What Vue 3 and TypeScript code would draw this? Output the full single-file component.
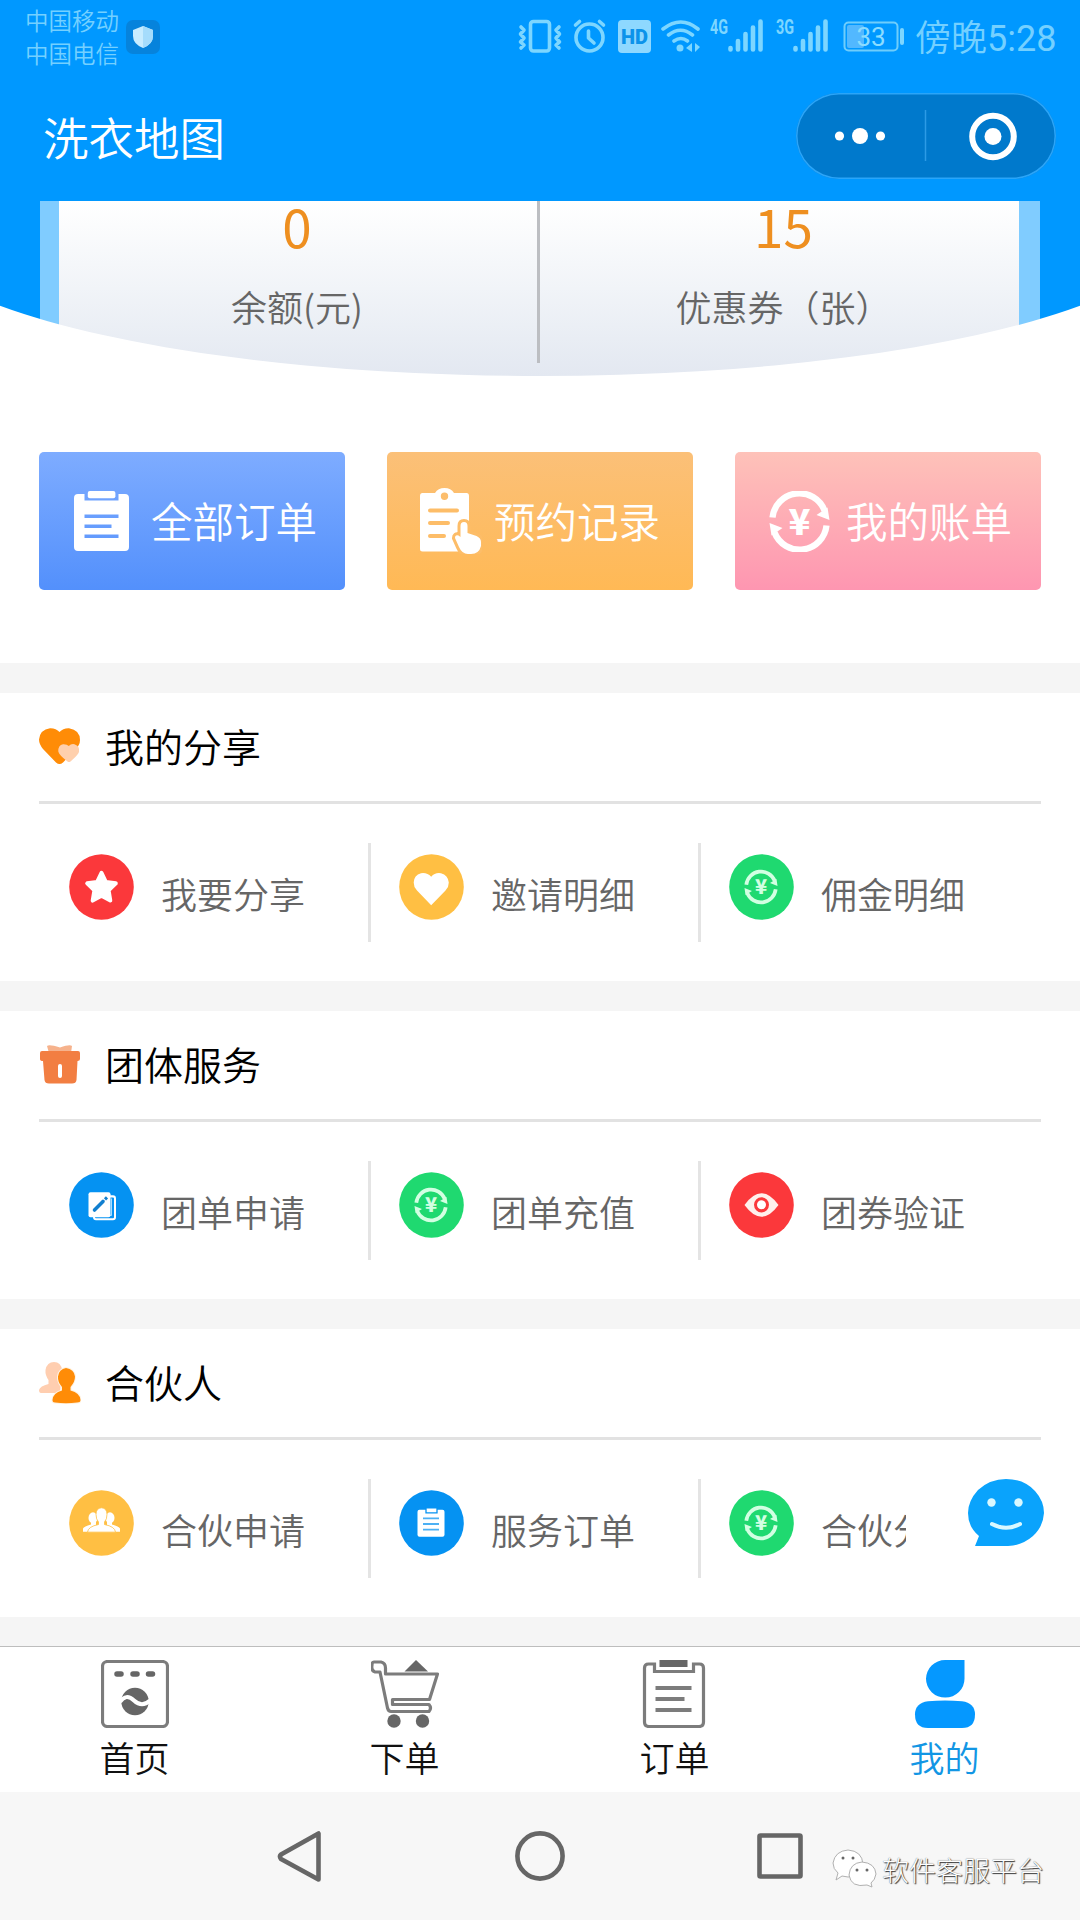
<script setup lang="ts">
interface Entry {
  label: string
  icon: string
  color: string
  clipped?: boolean
}
interface Section {
  title: string
  icon: string
  entries: Entry[]
}

const red = '#fb383b'
const yellow = '#ffbf43'
const green = '#1fd970'
const blue = '#0592f2'

const actions = [
  { label: '全部订单', icon: 'orders', kind: 'all' },
  { label: '预约记录', icon: 'booking', kind: 'booking' },
  { label: '我的账单', icon: 'bill', kind: 'bill' },
]

const sections: Section[] = [
  {
    title: '我的分享',
    icon: 'hearts',
    entries: [
      { label: '我要分享', icon: 'star', color: red },
      { label: '邀请明细', icon: 'heart', color: yellow },
      { label: '佣金明细', icon: 'money', color: green },
    ],
  },
  {
    title: '团体服务',
    icon: 'gift',
    entries: [
      { label: '团单申请', icon: 'edit', color: blue },
      { label: '团单充值', icon: 'money', color: green },
      { label: '团券验证', icon: 'eye', color: red },
    ],
  },
  {
    title: '合伙人',
    icon: 'partners',
    entries: [
      { label: '合伙申请', icon: 'team', color: yellow },
      { label: '服务订单', icon: 'list', color: blue },
      { label: '合伙分', icon: 'money', color: green, clipped: true },
    ],
  },
]

const tabs = [
  { label: '首页', icon: 'washer', active: false },
  { label: '下单', icon: 'cart', active: false },
  { label: '订单', icon: 'sheet', active: false },
  { label: '我的', icon: 'me', active: true },
]
</script>

<template>
  <div class="page">
    <header class="top">
      <div class="status">
        <div class="carriers">
          <span>中国移动</span>
          <span>中国电信</span>
        </div>
        <svg class="shield" width="34" height="34" viewBox="0 0 34 34">
          <rect width="34" height="34" rx="7" fill="#0683dc" />
          <path d="M17 6 L27 10 V16 Q27 24 17 28 Q7 24 7 16 V10 Z" fill="#c8ecff" />
          <path d="M17 6 L27 10 V16 Q27 24 17 28 Z" fill="#a5dcfc" />
        </svg>
        <svg class="indicators" width="390" height="40" viewBox="515 16 390 40">
          <g fill="none" stroke="#7dd6ff" stroke-width="3.6" stroke-linecap="round" stroke-linejoin="round">
            <rect x="530.5" y="21.5" width="19" height="29.5" rx="3" />
            <path d="M521 27l3 3-3.500 4 3.500 4-3.500 4 3.500 3-3 3M559 27l-3 3 3.500 4-3.500 4 3.500 4-3.500 3 3 3" />
            <circle cx="589.500" cy="37.500" r="13.500" />
            <path d="M588.500 31v7l5.500 5M575.500 25l4-3.500M603.500 25l-4-3.500" />
            <path d="M663 29q18-14 35 0M668.500 35q12-9.500 24 0M674 41q7-5 13.500 0" />
          </g>
          <circle cx="680" cy="48" r="3.500" fill="#7dd6ff" />
          <path d="M692 43v9l-6-4zM695 43v9l5-5z" fill="#7dd6ff" />
          <rect x="618" y="20" width="33" height="33" rx="4" fill="#8ed8ff" />
          <text x="634.500" y="44" class="hd">HD</text>
          <text x="710" y="34" class="gen" textLength="18" lengthAdjust="spacingAndGlyphs">4G</text>
          <text x="776" y="34" class="gen" textLength="18" lengthAdjust="spacingAndGlyphs">3G</text>
          <g stroke="#7dd6ff" stroke-width="4.600" stroke-linecap="round">
            <path d="M730.500 48v1.500M738 41v8.500M745.500 34v15.500M753 27.500v22M760.500 21.500v28" />
            <path d="M795.500 48v1.500M803 41v8.500M810.500 34v15.500M818 27.500v22M825.500 21.500v28" />
          </g>
          <rect x="844.500" y="22.500" width="53" height="28" rx="4" fill="none" stroke="#6fcdfb" stroke-width="2" />
          <rect x="847" y="25" width="17" height="23" rx="2" fill="#52b8ff" />
          <path d="M902 30v13" stroke="#7dd6ff" stroke-width="4" stroke-linecap="round" />
          <text x="871" y="46" class="charge">33</text>
        </svg>
        <div class="clock">傍晚<b>5:28</b></div>
      </div>
      <div class="navbar">
        <h1>洗衣地图</h1>
        <div class="capsule">
          <svg width="260" height="86" viewBox="0 0 260 86">
            <g fill="#fff">
              <circle cx="43.500" cy="43" r="4.600" />
              <circle cx="64" cy="43" r="8" />
              <circle cx="84.500" cy="43" r="4.600" />
              <circle cx="197" cy="43.500" r="8.500" />
            </g>
            <path d="M129.500 17v51" stroke="#2c9be6" stroke-width="1.500" />
            <circle cx="197" cy="43.500" r="20.800" fill="none" stroke="#fff" stroke-width="6" />
          </svg>
        </div>
      </div>
    </header>

    <section class="hero">
      <div class="edge">
        <div class="wallet">
          <div class="stat balance">
            <strong>0</strong>
            <span>余额(元)</span>
          </div>
          <i class="split"></i>
          <div class="stat coupons">
            <strong>15</strong>
            <span>优惠券（张）</span>
          </div>
        </div>
      </div>
      <svg class="curve" width="1080" height="176" viewBox="0 0 1080 176">
        <path d="M0 104.800A645 155 0 0 0 1080 104.800V176H0Z" fill="#fff" />
      </svg>
    </section>

    <nav class="actions">
      <div v-for="a in actions" :key="a.label" class="action" :class="a.kind">
        <svg v-if="a.icon === 'orders'" width="55" height="60" viewBox="0 0 55 60">
          <path
            fill="#fff"
            fill-rule="evenodd"
            d="M4 3H10.500V9.500H44.500V3H51Q55 3 55 7V56Q55 60 51 60H4Q0 60 0 56V7Q0 3 4 3ZM10.500 23.500V27H44.500V23.500ZM10.500 33.500V37H37.500V33.500ZM10.500 43.500V47H44.500V43.500Z"
          />
          <rect x="13.800" y="0" width="27.600" height="7.300" rx="2" fill="#fff" />
        </svg>
        <svg v-else-if="a.icon === 'booking'" width="62" height="66" viewBox="0 0 62 66">
          <path
            fill="#fff"
            fill-rule="evenodd"
            d="M2.500 5H15Q18 0 24.500 0T34 5H46.500Q49 5 49 8V63.500H2.500Q0 63.500 0 61V8Q0 5 2.500 5ZM24.500 4.500A3.700 3.700 0 1 0 24.500 11.900A3.700 3.700 0 1 0 24.500 4.500Z"
          />
          <path d="M10 22.500H37M10 35H28M10 48H24" stroke="#fdbd68" stroke-width="4" stroke-linecap="round" />
          <path
            d="M40.500 38Q40.500 34 44 34T47.500 38V45L56.500 48Q61 50 61 54V58Q59 66 51 66H48Q42 66 39 59L35 50Q35 46.500 38.500 47.500L40.500 49Z"
            fill="#fff"
            stroke="#fdbd68"
            stroke-width="6"
            paint-order="stroke"
          />
        </svg>
        <svg v-else width="61" height="61" viewBox="-30.500 -30.500 61 61">
          <g fill="none" stroke="#fff" stroke-width="6.300">
            <path d="M-27-4A27 27 0 0 1 25-11" />
            <path d="M27 4A27 27 0 0 1-25 11" />
          </g>
          <path d="M17-6.500 30-1.500 28-14ZM-17 6.500-30 1.500-28 14Z" fill="#fff" />
          <text x="0" y="13.500" class="yen">¥</text>
        </svg>
        <span>{{ a.label }}</span>
      </div>
    </nav>

    <section v-for="s in sections" :key="s.title" class="group">
      <h2>
        <svg width="42" height="42" viewBox="0 0 42 42">
          <template v-if="s.icon === 'hearts'">
            <path d="M20.500 6Q24 2 30 2.200Q41 4 41 14Q41 19 36 24L24 36.500Q20.500 39.500 17 36.500L4 23Q0 18 0 13.500Q1 3.500 11 2.200Q17 2 20.500 6Z" fill="#ff8c07" />
            <path d="M29.800 20Q32 17.500 35.500 18.200Q41 20 40 26Q39 29 31.500 35.500Q30 36.500 28.500 35.500Q20 29 19.300 25.500Q19 19 24 18.200Q28 18 29.800 20Z" fill="#ffd0ad" />
          </template>
          <template v-else-if="s.icon === 'gift'">
            <path d="M8 2Q10 0 21 3.500Q31 0 33 2L32 9H10Z" fill="#f6b28c" />
            <path d="M3 7H39Q41 7 41 9V15Q41 17 38.500 17L37.500 36Q37 39.500 33 39.500H10Q6 39.500 5.500 36L4 17Q1 17 1 15V9Q1 7 3 7Z" fill="#f27e42" />
            <rect x="19" y="20" width="4" height="14" rx="2" fill="#fff" />
          </template>
          <template v-else>
            <path d="M15 0Q22 0 23 8L21 31H2Q0 31 0 28Q1 24 9.500 22V18Q6 13 6.500 8Q8 0 15 0Z" fill="#ffceb0" />
            <path d="M27 6Q35 7 36 14.500Q36 20 31.500 25V28.500Q41 31 41.500 38Q41.500 40.500 38 40.500Q27 42 16 40.500Q13.500 40.500 13.500 38Q14 31 23 28.500V25Q18.500 20 19 14.500Q20 7 27 6Z" fill="#ff8c07" stroke="#fff2e0" stroke-width="2" paint-order="stroke" />
          </template>
        </svg>
        <span>{{ s.title }}</span>
      </h2>
      <div class="entries">
        <div v-for="e in s.entries" :key="e.label" class="entry">
          <svg width="65" height="66" viewBox="0 0 65 65" preserveAspectRatio="none">
            <circle cx="32.500" cy="32.500" r="32.300" :fill="e.color" />
            <path
              v-if="e.icon === 'star'"
              d="M32.500 18.500L36.800 27.500L46.800 28.900L39.600 35.800L41.300 45.800L32.500 41.100L23.700 45.800L25.400 35.800L18.200 28.900L28.200 27.500Z"
              fill="#fff"
              stroke="#fff"
              stroke-width="4"
              stroke-linejoin="round"
            />
            <path v-else-if="e.icon === 'heart'" d="M32.200 22.500Q36 18 42 19Q49 21 49.800 28Q50 32 46.500 36L32.200 50.500L18 36Q14.500 32 14.700 28Q15 21 22 19Q28 18 32.200 22.500Z" fill="#fff" />
            <g v-else-if="e.icon === 'money'" transform="translate(32 32.500)">
              <g fill="none" stroke="#d2ffe2" stroke-width="3.700">
                <path d="M-14.700-2.200A14.800 14.800 0 0 1 13.700-6M14.700 2.200A14.800 14.800 0 0 1-13.700 6" />
              </g>
              <path d="M9-4 16.500-1 15.500-8ZM-9 4-16.500 1-15.500 8Z" fill="#d2ffe2" />
              <text x="0" y="7.200" class="yen small">¥</text>
            </g>
            <template v-else-if="e.icon === 'edit'">
              <rect x="25" y="24" width="21" height="22.500" rx="2" fill="#0592f2" stroke="#fff" stroke-width="2" />
              <path d="M42.500 26V42.500H28" fill="none" stroke="#a8deff" stroke-width="1" />
              <rect x="19.500" y="20" width="22" height="24.500" rx="2" fill="#fff" />
              <path d="M25.500 37.500L34 29" stroke="#117fcf" stroke-width="3.500" stroke-linecap="round" />
              <path d="M36 27L38 25" stroke="#117fcf" stroke-width="3" />
            </template>
            <template v-else-if="e.icon === 'eye'">
              <path d="M15.500 32.500Q24 21 32.500 21T49.500 32.500Q41 44 32.500 44T15.500 32.500Z" fill="#fff0ec" />
              <circle cx="32.500" cy="32.300" r="6" fill="#fff" stroke="#fb383b" stroke-width="3" />
            </template>
            <g v-else-if="e.icon === 'team'" fill="#fff">
              <ellipse cx="24" cy="27.500" rx="4.500" ry="5.500" />
              <ellipse cx="41" cy="27.500" rx="4.500" ry="5.500" />
              <path d="M14 41V38Q15 36 22 34V30H27V41ZM51 41V38Q50 36 43 34V30H38V41Z" />
              <path d="M32.500 17.500Q38 18 38 24Q38 29 35.500 31.500V34Q46 36 46.500 41.500H18.500Q19 36 29.500 34V31.500Q27 29 27 24Q27 18 32.500 17.500Z" stroke="#ffbf43" stroke-width="0.800" />
            </g>
            <template v-else>
              <rect x="18.500" y="19.500" width="27" height="26.500" rx="2" fill="#fff" />
              <path d="M27 17.500H38V22.500H27Z" fill="#fff" stroke="#0592f2" stroke-width="1.300" />
              <path d="M24 28H40M24 33.500H40M24 39H40" stroke="#4cb0f4" stroke-width="1.800" />
            </template>
          </svg>
          <span :class="{ clipped: e.clipped }">{{ e.label }}</span>
        </div>
      </div>
    </section>

    <nav class="tabs">
      <div v-for="t in tabs" :key="t.label" class="tab" :class="{ active: t.active }">
        <svg width="68" height="68" viewBox="0 0 68 68">
          <template v-if="t.icon === 'washer'">
            <rect x="1.500" y="1.500" width="65" height="65" rx="5" fill="none" stroke="#7c7c7c" stroke-width="3.200" />
            <path d="M16 14h4M32 14h4M47.500 14h4" stroke="#666" stroke-width="5.500" stroke-linecap="round" />
            <circle cx="34" cy="41.500" r="13.700" fill="#666" />
            <path d="M19 42Q25 33 33 40.500T49 40.500" fill="none" stroke="#fff" stroke-width="4" />
          </template>
          <g v-else-if="t.icon === 'cart'">
            <path
              d="M3 2H10Q14.500 3 14.500 8V14H66.500L58.500 39.500H21.500V44.500H58Q61 48 58 51.500H20Q17.500 51.500 16.500 48L9 12H4Q0 11 1 5Q1 2 3 2Z"
              fill="none"
              stroke="#7c7c7c"
              stroke-width="3.200"
              stroke-linejoin="round"
            />
            <path d="M45 0L57 11.500H33.500Z" fill="#666" />
            <circle cx="23" cy="61" r="6.700" fill="#666" />
            <circle cx="51.500" cy="61" r="6.700" fill="#666" />
          </g>
          <g v-else-if="t.icon === 'sheet'" transform="translate(-1.500 0)" fill="none" stroke="#7c7c7c" stroke-width="3.200">
            <path d="M15 4H9Q5 4 5 8V62Q5 66.500 9.500 66.500H59.500Q64 66.500 64 62V8Q64 4 60 4H54V11.500H15Z" />
            <rect x="20" y="0" width="28" height="7" fill="#666" stroke="none" />
            <path d="M16 28H52M16 39H45M16 50H52" stroke-width="3.800" />
          </g>
          <g v-else fill="#0598ff">
            <path d="M53.500 0V18.700A19.250 18.800 0 1 1 34.250 0Z" />
            <path d="M17 41.300Q34 39.500 51 41.300Q64 43 64 54.500Q64 68 51 68H17Q4 68 4 54.500Q4 43 17 41.300Z" />
          </g>
        </svg>
        <span>{{ t.label }}</span>
      </div>
    </nav>

    <footer class="system">
      <svg width="1080" height="128" viewBox="0 1792 1080 128">
        <g fill="none" stroke="#666" stroke-width="4.600" stroke-linejoin="round">
          <path d="M318.500 1833.500V1879.500L281 1859Q279 1856.500 281 1854.500Z" />
          <circle cx="540" cy="1856" r="22.600" />
          <rect x="759.500" y="1835.500" width="41" height="41" rx="1" />
        </g>
      </svg>
    </footer>

    <svg class="chat" width="76" height="68" viewBox="0 0 76 68">
      <path d="M38 0Q56 0 67 12Q76 22 76 34Q75 48 65 57Q54 66.500 40 67H7L11 57Q0 48 0 34Q0 22 10 11Q22 0 38 0Z" fill="#0aa3fc" />
      <g fill="#d9f8ff">
        <circle cx="23.500" cy="23.500" r="4.200" />
        <circle cx="50.500" cy="23.500" r="4.200" />
      </g>
      <path d="M24 45Q38 52.500 52 45" fill="none" stroke="#d9f8ff" stroke-width="4" stroke-linecap="round" />
    </svg>

    <div class="watermark">
      <svg width="46" height="40" viewBox="0 0 46 40">
        <g fill="#fff" stroke="#b0b0b0" stroke-width="1">
          <path d="M16 1Q30 2 31 15Q29 28 16 28L10 27L4 31L6 24Q1 20 1 14Q3 2 16 1Z" />
          <path d="M30 13Q43 14 44 25Q43 31 39 34L40 38L35 36Q19 39 17 26Q18 14 30 13Z" />
        </g>
        <g fill="#666">
          <circle cx="11" cy="9" r="1.500" />
          <circle cx="21" cy="9" r="1.500" />
          <circle cx="25" cy="21" r="1.500" />
          <circle cx="35" cy="21" r="1.500" />
        </g>
      </svg>
      <span>软件客服平台</span>
    </div>
  </div>
</template>

<style>
body {
  margin: 0;
}
</style>

<style scoped>
.page {
  position: relative;
  display: flex;
  flex-direction: column;
  width: 1080px;
  height: 1920px;
  overflow: hidden;
  background: #f5f5f5;
  font-family: 'Noto Sans CJK SC', 'Noto Sans', sans-serif;
  font-weight: 350;
  white-space: nowrap;
}
svg {
  display: block;
  flex: none;
}
.top {
  flex: none;
  height: 201px;
  background: #0098ff;
}
.status {
  display: flex;
  align-items: flex-start;
  height: 75px;
  color: #74d0ff;
}
.carriers {
  display: flex;
  flex-direction: column;
  width: 101px;
  padding: 4px 0 0 25px;
  font-size: 23.500px;
  line-height: 32.500px;
}
.shield {
  margin-top: 20px;
}
.indicators {
  margin: 16px 0 0 355px;
}
.hd {
  fill: #0c93ea;
  font: 900 20px Roboto, sans-serif;
  text-anchor: middle;
}
.gen {
  fill: #7dd6ff;
  font: 700 20px Roboto, sans-serif;
}
.charge {
  fill: #8bdcff;
  font: 400 26px Roboto, sans-serif;
  text-anchor: middle;
}
.clock {
  margin-left: 10px;
  font-size: 36px;
  line-height: 70px;
}
.clock b {
  font: 400 36px Roboto, sans-serif;
}
.navbar {
  display: flex;
  align-items: center;
  justify-content: space-between;
  height: 122px;
  padding: 0 24px 0 43px;
}
h1 {
  margin: -1px 0 0;
  color: #fff;
  font-size: 45.500px;
  font-weight: 350;
  line-height: 66px;
}
.capsule {
  box-sizing: border-box;
  width: 260px;
  height: 86px;
  border-radius: 43px;
  background: #0079cc;
  box-shadow: inset 0 0 0 1.500px #2ba5f8;
}
.hero {
  position: relative;
  flex: none;
  height: 175px;
  background: #0098ff;
}
.curve {
  position: absolute;
  left: 0;
  top: 0;
}
.edge {
  height: 100%;
  margin: 0 40px;
  padding: 0 21px 0 19px;
  background: #80ccff;
}
.wallet {
  display: flex;
  height: 100%;
  background: linear-gradient(#fff, #f1f4f8 50%, #e3e8f1);
}
.stat {
  box-sizing: border-box;
  display: flex;
  flex-direction: column;
  align-items: center;
  color: #666;
  font-size: 36px;
  line-height: 52px;
}
.balance {
  width: 478px;
  padding-right: 2px;
}
.coupons {
  flex: 1;
  padding-left: 8px;
}
.stat strong {
  margin: -4px 0 27px;
  color: #ee8f20;
  font-size: 53px;
  font-weight: 400;
  line-height: 56px;
}
.split {
  width: 3px;
  height: 162px;
  background: #bcbec2;
}
.actions {
  flex: none;
  display: flex;
  gap: 42px;
  box-sizing: border-box;
  height: 287px;
  padding: 76px 39px 73px;
  background: #fff;
}
.action {
  box-sizing: border-box;
  display: flex;
  align-items: center;
  width: 306px;
  height: 138px;
  border-radius: 5px;
  color: #fff;
  font-size: 41.500px;
}
.action span {
  margin-top: -2px;
}
.action.all {
  padding-left: 35px;
  gap: 22px;
  background: linear-gradient(#7eacff, #5390fc);
}
.action.booking {
  padding-left: 33px;
  gap: 12px;
  background: linear-gradient(#fbc078, #ffb955);
}
.action.bill {
  padding-left: 34px;
  gap: 16px;
  background: linear-gradient(#fec2b9, #fe96b1);
}
.yen {
  fill: #fff;
  font: 900 36px 'Noto Sans CJK SC', sans-serif;
  text-anchor: middle;
}
.yen.small {
  fill: #d2ffe2;
  font-size: 20px;
}
.group {
  flex: none;
  height: 288px;
  margin-top: 30px;
  background: #fff;
}
h2 {
  display: flex;
  align-items: center;
  gap: 24px;
  height: 108px;
  margin: 0 39px;
  border-bottom: 3px solid #e2e2e2;
  color: #000;
  font-size: 39px;
  font-weight: 350;
}
h2 span {
  margin-top: -5px;
}
.entries {
  display: flex;
  padding: 39px 0 0 41px;
}
.entry {
  box-sizing: border-box;
  display: flex;
  width: 330px;
  height: 99px;
  padding: 11px 0 0 28px;
  border-right: 3px solid #e4e4e4;
  color: #666;
  font-size: 36px;
  line-height: 52px;
}
.entry:last-child {
  border-right: 0;
}
.entry span {
  height: 52px;
  margin: 13px 0 0 27px;
}
.entry .clipped {
  width: 85px;
  overflow: hidden;
}
.tabs {
  flex: none;
  display: flex;
  box-sizing: border-box;
  height: 146px;
  margin-top: 29px;
  border-top: 1px solid #bdbdbd;
  background: #fff;
}
.tab {
  display: flex;
  flex-direction: column;
  align-items: center;
  width: 270px;
  padding-top: 13px;
  color: #111;
  font-size: 35px;
  line-height: 58px;
}
.tab span {
  margin-right: 1px;
}
.tab.active {
  color: #1296e4;
}
.system {
  flex: none;
  height: 128px;
  background: #f7f7f7;
}
.chat {
  position: absolute;
  left: 968px;
  top: 1479px;
}
.watermark {
  position: absolute;
  left: 832px;
  top: 1849px;
  display: flex;
  gap: 4px;
  color: #fff;
  font-size: 27px;
  font-weight: 300;
  line-height: 42px;
  text-shadow: 1px 1px 1px #333, 0 0 1px #555;
}
</style>
